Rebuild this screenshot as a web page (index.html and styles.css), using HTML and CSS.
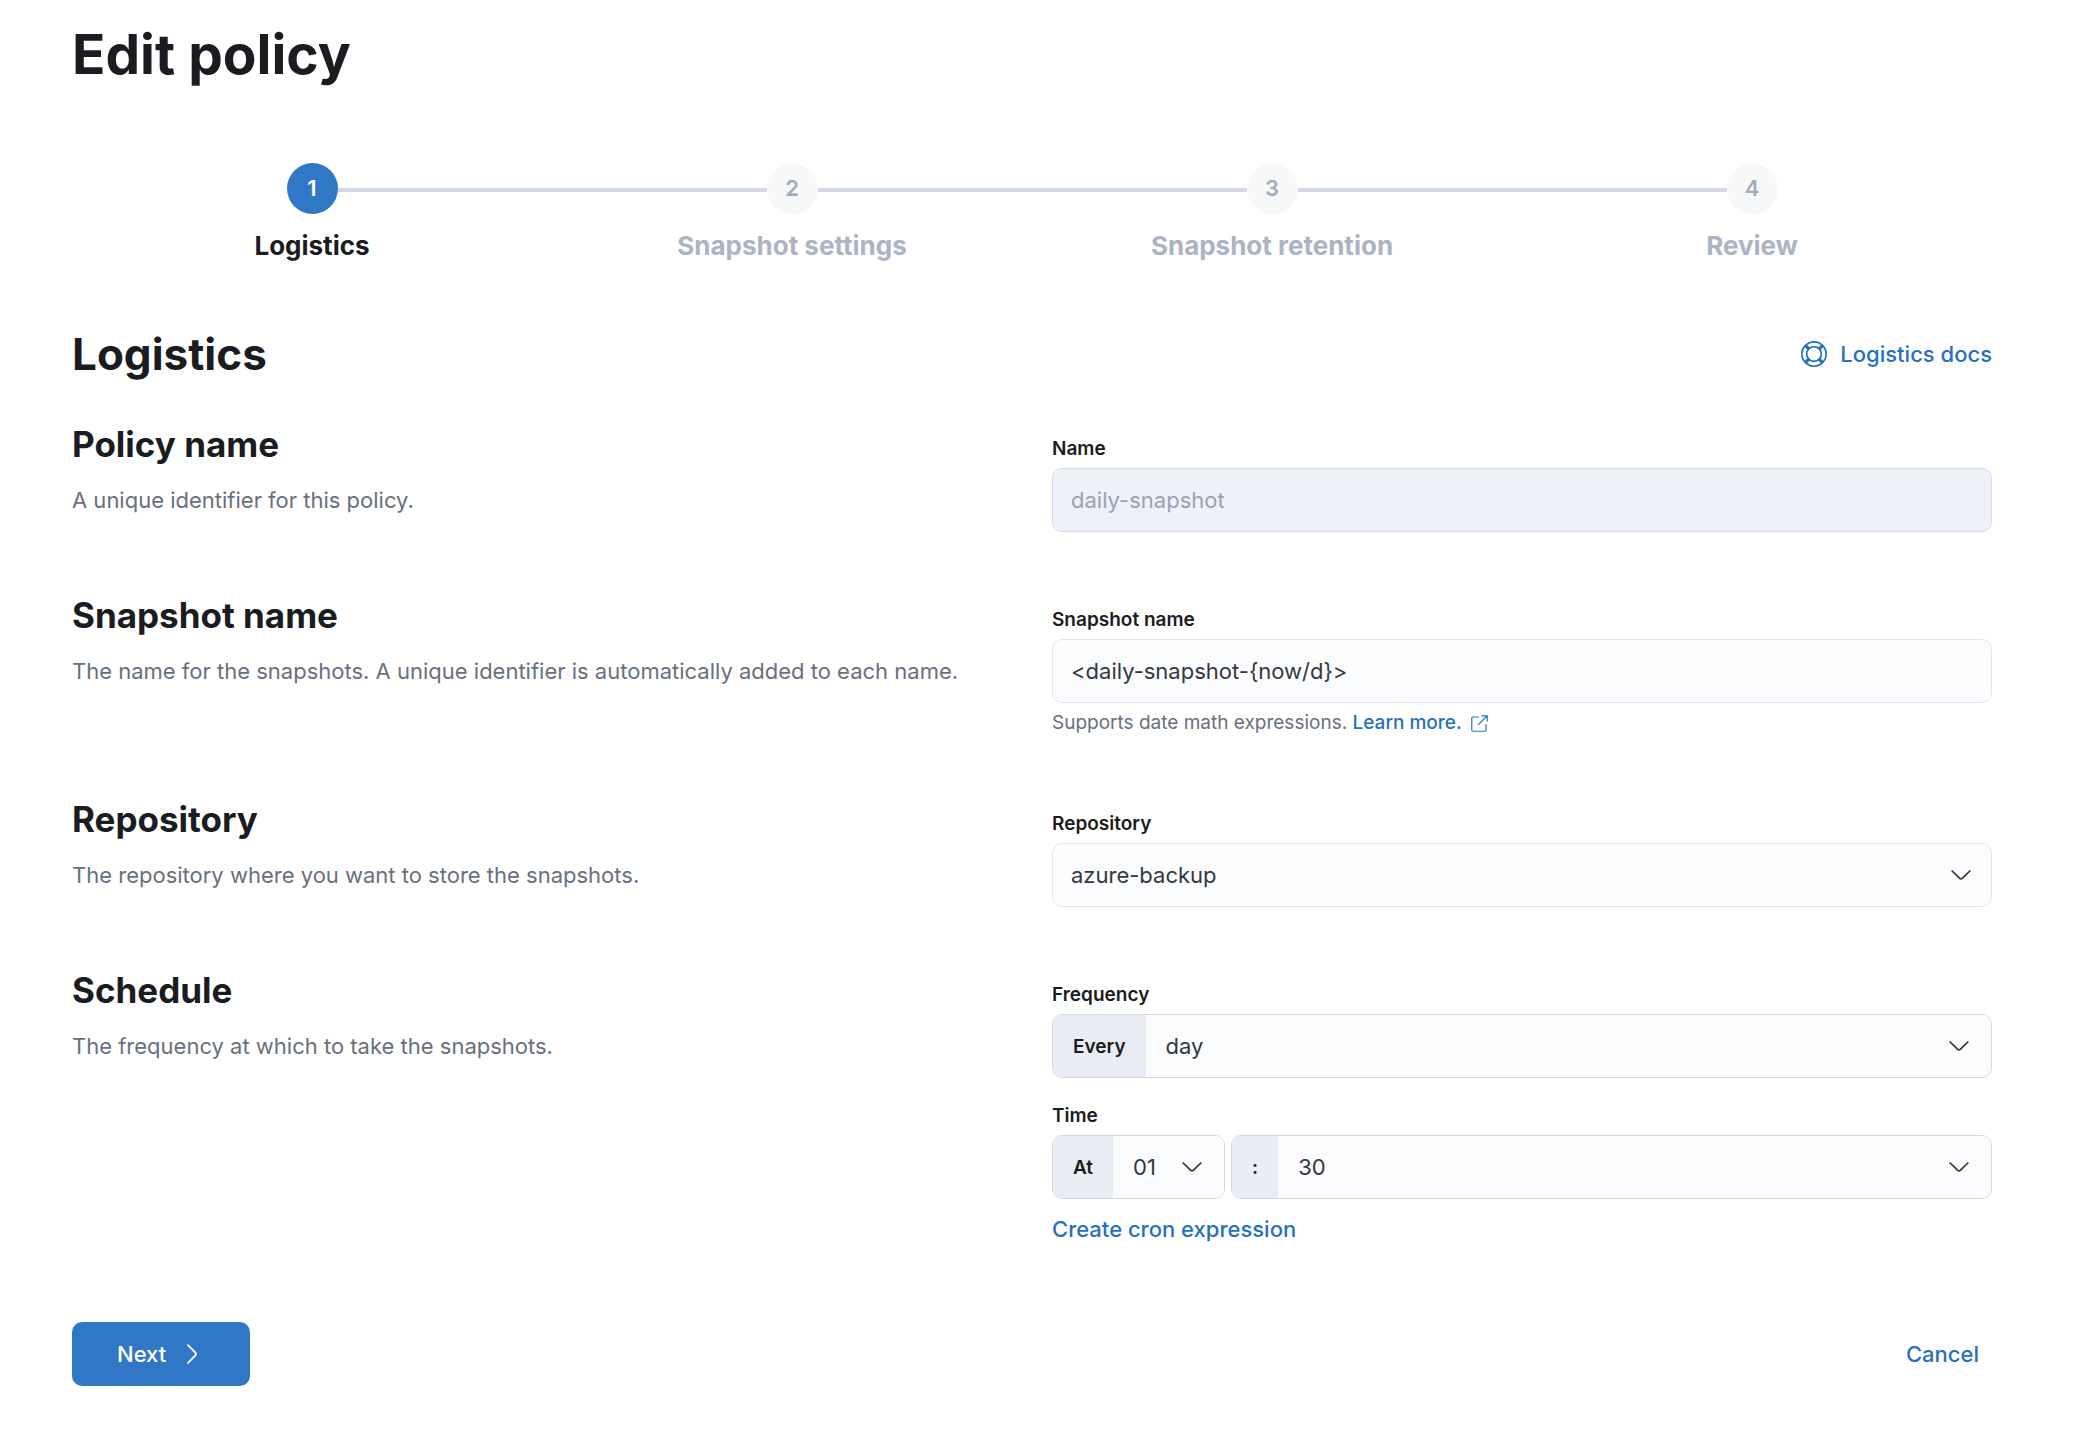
FILE: index.html
```html
<!DOCTYPE html>
<html lang="en">
<head>
<meta charset="utf-8">
<title>Edit policy</title>
<link rel="stylesheet" href="styles.css">
</head>
<body>
<svg class="sprite" aria-hidden="true">
  <symbol id="arrow-down" viewBox="0 0 16 16"><path d="M13.069 5.157L8.384 9.768a.546.546 0 01-.768 0L2.93 5.158a.552.552 0 00-.771 0 .53.53 0 000 .759l4.684 4.61c.641.631 1.672.63 2.312 0l4.684-4.61a.53.53 0 000-.76.552.552 0 00-.771 0z"/></symbol>
  <symbol id="arrow-right" viewBox="0 0 16 16"><path d="M5.157 13.069l4.611-4.685a.546.546 0 000-.768L5.158 2.93a.552.552 0 010-.771.53.53 0 01.759 0l4.61 4.684a1.65 1.65 0 010 2.312l-4.61 4.684a.53.53 0 01-.76 0 .552.552 0 010-.771z"/></symbol>
  <symbol id="help" viewBox="0 0 16 16"><path d="M13.6 12.186l-1.357-1.358c-.025-.025-.058-.034-.084-.056.53-.794.84-1.746.84-2.773a4.977 4.977 0 00-.84-2.772c.026-.02.059-.03.084-.056L13.6 3.813a6.96 6.96 0 010 8.373zM8 15a6.956 6.956 0 01-4.186-1.4l1.358-1.358c.025-.025.034-.057.055-.084C6.02 12.688 6.974 13 8 13a4.978 4.978 0 002.773-.84c.02.026.03.058.056.083l1.357 1.358A6.956 6.956 0 018 15zm-5.601-2.813a6.963 6.963 0 010-8.373l1.359 1.358c.024.025.057.035.084.056A4.97 4.97 0 003 8c0 1.027.31 1.98.842 2.773-.027.022-.06.031-.084.056l-1.36 1.358zm5.6-.187A4 4 0 118 4a4 4 0 010 8zM8 1c1.573 0 3.019.525 4.187 1.4l-1.357 1.358c-.025.025-.035.057-.056.084A4.979 4.979 0 008 3a4.979 4.979 0 00-2.773.842c-.021-.027-.03-.059-.055-.084L3.814 2.4A6.957 6.957 0 018 1zm0-1a8.001 8.001 0 10.003 16.002A8.001 8.001 0 008 0z"/></symbol>
  <symbol id="popout" viewBox="0 0 16 16"><path fill="none" stroke="currentColor" stroke-linecap="round" stroke-linejoin="round" d="M7 2.5H2.5a1 1 0 0 0-1 1v10a1 1 0 0 0 1 1h10a1 1 0 0 0 1-1V9M10 1.500h4.500V6M14.300 1.700L7 9"/></symbol>
</svg>
<main class="page">
  <h1 class="page-title">Edit policy</h1>

  <ol class="steps">
    <li class="step step-current" aria-current="step"><span class="step-number">1</span><span class="step-title">Logistics</span></li>
    <li class="step"><span class="step-number">2</span><span class="step-title">Snapshot settings</span></li>
    <li class="step"><span class="step-number">3</span><span class="step-title">Snapshot retention</span></li>
    <li class="step"><span class="step-number">4</span><span class="step-title">Review</span></li>
  </ol>

  <form class="form">
    <header class="form-header">
      <h2 class="form-title">Logistics</h2>
      <a class="link docs-link" href="#docs"><svg class="icon" aria-hidden="true"><use href="#help"/></svg>Logistics docs</a>
    </header>

    <section class="row">
      <div class="about">
        <h3 class="row-title">Policy name</h3>
        <p class="row-text">A unique identifier for this policy.</p>
      </div>
      <div class="fields">
        <div class="field">
          <label class="label" for="name">Name</label>
          <input class="control" id="name" type="text" value="daily-snapshot" disabled>
        </div>
      </div>
    </section>

    <section class="row">
      <div class="about">
        <h3 class="row-title">Snapshot name</h3>
        <p class="row-text">The name for the snapshots. A unique identifier is automatically added to each name.</p>
      </div>
      <div class="fields">
        <div class="field">
          <label class="label" for="snapshot-name">Snapshot name</label>
          <input class="control" id="snapshot-name" type="text" value="&lt;daily-snapshot-{now/d}&gt;">
          <p class="help">Supports date math expressions. <a class="link help-link" href="#date-math">Learn more.<svg class="icon-small" aria-hidden="true"><use href="#popout"/></svg></a></p>
        </div>
      </div>
    </section>

    <section class="row">
      <div class="about">
        <h3 class="row-title">Repository</h3>
        <p class="row-text">The repository where you want to store the snapshots.</p>
      </div>
      <div class="fields">
        <div class="field">
          <label class="label" for="repository">Repository</label>
          <div class="picker">
            <select class="control" id="repository"><option>azure-backup</option></select>
            <svg class="icon" aria-hidden="true"><use href="#arrow-down"/></svg>
          </div>
        </div>
      </div>
    </section>

    <section class="row">
      <div class="about">
        <h3 class="row-title">Schedule</h3>
        <p class="row-text">The frequency at which to take the snapshots.</p>
      </div>
      <div class="fields">
        <div class="field">
          <label class="label" for="frequency">Frequency</label>
          <div class="group">
            <span class="prepend">Every</span>
            <div class="picker">
              <select class="control" id="frequency"><option>day</option></select>
              <svg class="icon" aria-hidden="true"><use href="#arrow-down"/></svg>
            </div>
          </div>
        </div>
        <div class="field">
          <label class="label" for="hour">Time</label>
          <div class="time">
            <div class="group group-hour">
              <span class="prepend">At</span>
              <div class="picker">
                <select class="control" id="hour"><option>01</option></select>
                <svg class="icon" aria-hidden="true"><use href="#arrow-down"/></svg>
              </div>
            </div>
            <div class="group group-minute">
              <label class="prepend" for="minute">:</label>
              <div class="picker">
                <select class="control" id="minute"><option>30</option></select>
                <svg class="icon" aria-hidden="true"><use href="#arrow-down"/></svg>
              </div>
            </div>
          </div>
        </div>
        <a class="link cron-link" href="#cron">Create cron expression</a>
      </div>
    </section>

    <footer class="actions">
      <button class="button-next" type="submit">Next<svg class="icon" aria-hidden="true"><use href="#arrow-right"/></svg></button>
      <button class="link button-cancel" type="button">Cancel</button>
    </footer>
  </form>
</main>
</body>
</html>
```
FILE: styles.css
```css
* { box-sizing: border-box; }

body {
  margin: 0;
  background: #fff;
  color: #343741;
  font: 400 22px/36px Inter, "Liberation Sans", sans-serif;
  font-optical-sizing: none;
}

h1, h2, h3, p, ol { margin: 0; padding: 0; }
h1, h2, h3 { color: #1a1c21; font-weight: 700; font-optical-sizing: auto; }
button, input, select { font: inherit; font-optical-sizing: none; }

.sprite { display: none; }
.page { padding: 20px 102px 56px 72px; }
.page-title { font-size: 55px; line-height: 68px; }

.icon { flex: none; width: 26px; height: 26px; fill: currentColor; }
.icon-small { width: 19px; height: 19px; }

.link { color: #2770c0; font-weight: 500; text-decoration: none; }

/* Step indicator */
.steps {
  display: grid;
  grid-template-columns: repeat(4, 1fr);
  margin-top: 75px;
  list-style: none;
}
.step {
  display: grid;
  grid-template-columns: 1fr auto 1fr;
  align-items: center;
  row-gap: 16px;
  color: #abb4c4;
}
.step::before, .step::after {
  content: "";
  grid-row: 1;
  height: 4px;
  margin-top: 3px;
  background: #d3dae6;
}
.step::before { grid-column: 1; }
.step::after { grid-column: 3; }
.step:first-child::before, .step:last-child::after { visibility: hidden; }
.step-number {
  grid-area: 1 / 2;
  width: 51px;
  height: 51px;
  border-radius: 50%;
  background: #f7f8fa;
  color: #a2abba;
  font-weight: 600;
  line-height: 51px;
  text-align: center;
}
.step-title {
  grid-area: 2 / 1 / 3 / 4;
  font-size: 26px;
  font-weight: 700;
  font-optical-sizing: auto;
  line-height: 32px;
  text-align: center;
}
.step-current { color: #1a1c21; }
.step-current .step-number { background: #3077c6; color: #fff; }

/* Form */
.form-header {
  display: flex;
  align-items: center;
  justify-content: space-between;
  margin-top: 60px;
}
.form-title { font-size: 44px; line-height: 64px; }
.docs-link { display: flex; align-items: center; gap: 13px; }

.row {
  display: grid;
  grid-template-columns: 1fr 1fr;
  gap: 40px;
  margin-top: 57px;
}
.form-header + .row { margin-top: 32px; }
.row-title { font-size: 35px; line-height: 52px; }
.row-text { margin-top: 12px; color: #69707d; }
.fields { padding-top: 17px; }
.field + .field { margin-top: 24px; }
.label, .prepend { color: #1a1c21; font-size: 19px; font-weight: 600; }
.label { display: block; margin-bottom: 5px; line-height: 28px; }

.control {
  display: block;
  width: 100%;
  height: 64px;
  padding: 0 18px;
  border: 1px solid #e1e5ef;
  border-radius: 10px;
  background: #fbfcfd;
  color: #343741;
  appearance: none;
}
.control:disabled { border-color: #d6dcea; background: #eef1f7; color: #98a2b3; opacity: 1; }

.picker { display: grid; flex: 1; align-items: center; }
.picker > * { grid-area: 1 / 1; }
.picker .icon { justify-self: end; margin-right: 18px; pointer-events: none; }

.group {
  display: flex;
  height: 64px;
  overflow: hidden;
  border: 1px solid #d3dae6;
  border-radius: 10px;
  background: #fbfcfd;
}
.group .control { height: 62px; border: 0; border-radius: 0; padding-left: 20px; }
.group .icon { margin-right: 19px; }
.prepend { padding: 0 20px; background: #e9edf3; line-height: 64px; }
.time { display: flex; gap: 6px; }
.time .control { padding-right: 68px; }
.group-minute { flex: 1; }

.help { margin-top: 6px; color: #69707d; font-size: 19px; line-height: 27px; }
.help-link .icon-small { margin-left: 8px; vertical-align: -4px; }
.cron-link { display: block; width: fit-content; margin-top: 12px; }

.actions {
  display: flex;
  align-items: center;
  justify-content: space-between;
  margin-top: 75px;
}
.button-next {
  display: flex;
  align-items: center;
  gap: 13px;
  height: 64px;
  padding: 0 45px;
  border: 0;
  border-radius: 10px;
  background: #3077c6;
  color: #fff;
  font-weight: 500;
}
.button-cancel { height: 64px; padding: 0 13px; border: 0; background: none; }
```
